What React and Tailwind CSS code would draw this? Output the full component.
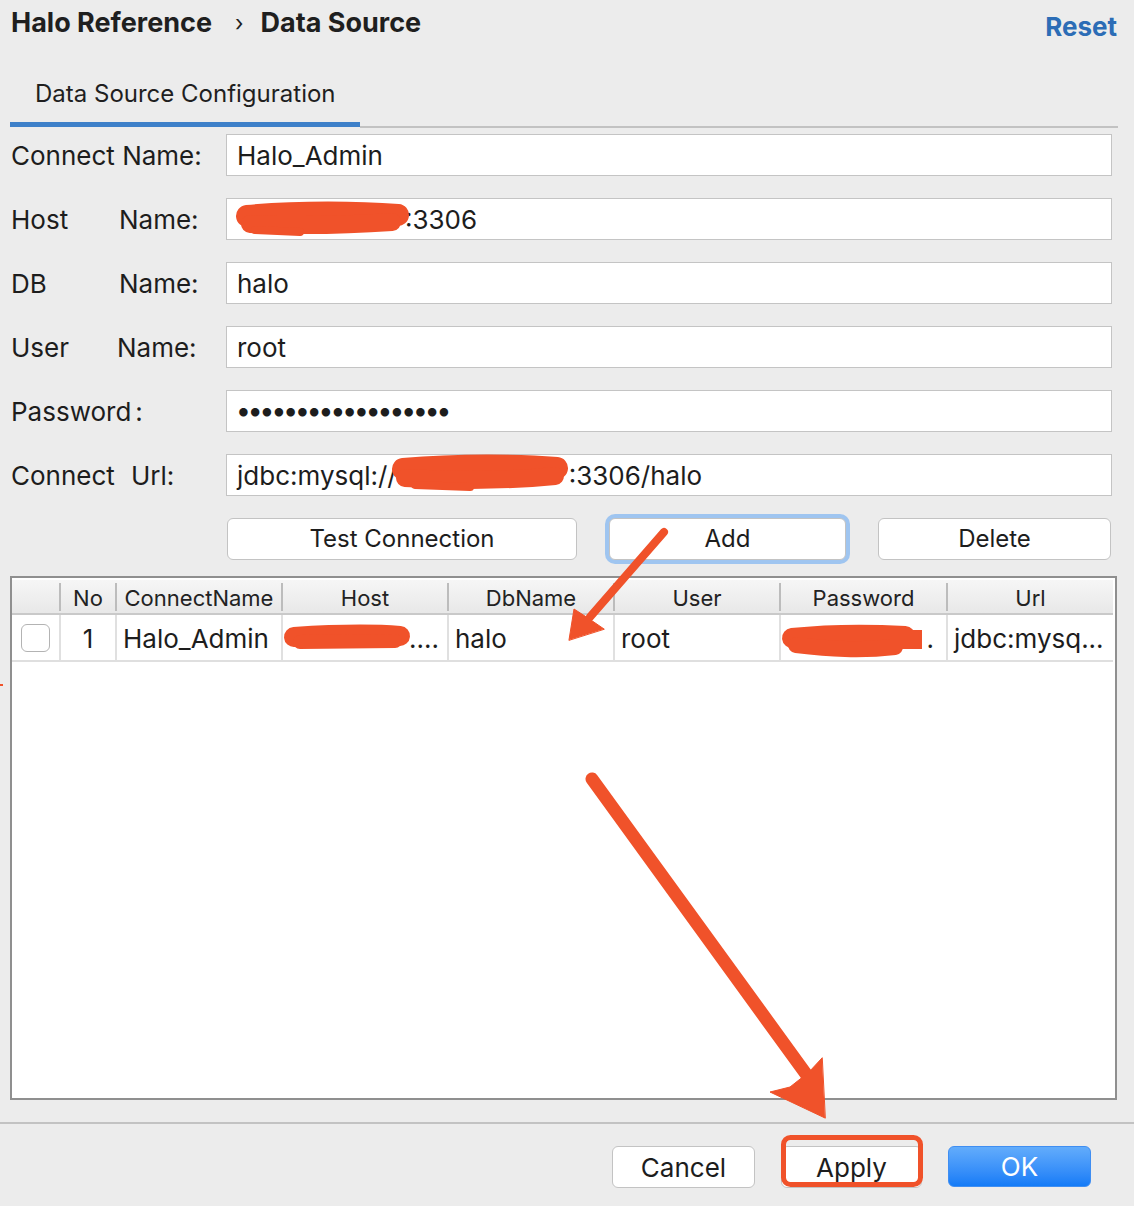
import React from "react";

const cols = [47, 56, 166, 166, 166, 166, 167, 167];

function Label({ children }) {
  return <div className="w-[215px] shrink-0 flex items-center text-[26px] text-[#1d1d1d]">{children}</div>;
}

function Field({ children }) {
  return (
    <div className="flex-1 h-[42px] bg-white border border-[#c4c4c4] flex items-center pl-[10px] text-[26px] text-[#1d1d1d] whitespace-nowrap">
      {children}
    </div>
  );
}

function Btn({ children, className = "" }) {
  return (
    <button className={"h-[42px] rounded-[6px] bg-white border border-[#c3c3c3] text-[24px] text-[#1d1d1d] flex items-center justify-center " + className}>
      {children}
    </button>
  );
}

export default function App() {
  const headers = ["", "No", "ConnectName", "Host", "DbName", "User", "Password", "Url"];
  return (
    <div className="relative w-[1134px] h-[1206px] bg-[#ececec] overflow-hidden font-[Inter,sans-serif] text-[#1d1d1d]">
      {/* Title bar */}
      <div className="h-[46px] flex items-center justify-between pl-[11px] pr-[17px]">
        <div className="flex items-center text-[27px] font-bold text-[#1f1f1f]">
          <span>Halo Reference</span>
          <span className="ml-[23px] mr-[17px] text-[22px] font-normal">›</span>
          <span>Data Source</span>
        </div>
        <div className="text-[26px] font-bold text-[#2c6db6] mt-[6px]">Reset</div>
      </div>

      {/* Tab strip */}
      <div className="flex items-end ml-[10px] mr-[16px] h-[82px]">
        <div className="w-[350px] h-[81px] mb-[1px] border-b-[5px] border-[#3e80c9] flex items-end pb-[13px] pl-[25px] text-[24px] leading-[30px] text-[#1f1f1f]">
          Data Source Configuration
        </div>
        <div className="flex-1 h-[2px] bg-[#c2c2c2]"></div>
      </div>

      {/* Form */}
      <div className="mt-[6px] pl-[11px] pr-[22px] flex flex-col gap-[22px]">
        <div className="flex">
          <Label>Connect Name:</Label>
          <Field>Halo_Admin</Field>
        </div>
        <div className="flex">
          <Label><span className="w-[108px]">Host</span><span>Name:</span></Label>
          <Field><span className="inline-block w-[168px]"></span>:3306</Field>
        </div>
        <div className="flex">
          <Label><span className="w-[108px]">DB</span><span>Name:</span></Label>
          <Field>halo</Field>
        </div>
        <div className="flex">
          <Label><span className="w-[106px]">User</span><span>Name:</span></Label>
          <Field>root</Field>
        </div>
        <div className="flex">
          <Label><span>Password</span><span className="ml-[4px]">:</span></Label>
          <Field><span className="tracking-[-1px] text-[27px] font-bold">••••••••••••••••••</span></Field>
        </div>
        <div className="flex">
          <Label><span className="w-[120px]">Connect</span><span>Url:</span></Label>
          <Field>jdbc:mysql://<span className="inline-block w-[172px]"></span>:3306/halo</Field>
        </div>
        <div className="flex pl-[216px] pr-[1px]">
          <Btn className="w-[350px]">Test Connection</Btn>
          <Btn className="w-[237px] ml-[32px] border-[#86b5ec] ring-4 ring-[#9fc5f0]">Add</Btn>
          <Btn className="w-[233px] ml-[32px]">Delete</Btn>
        </div>
      </div>

      {/* Table */}
      <div className="mt-[16px] ml-[10px] w-[1107px] h-[524px] border-2 border-[#8f8f8f] bg-white">
        <div className="mt-[2px] flex h-[35px] bg-gradient-to-b from-[#f6f6f6] to-[#e8e8e8] border-b-2 border-[#c9c9c9] w-[1101px]">
          {headers.map((h, i) => (
            <div key={i} style={{ width: cols[i] }} className="flex items-center shrink-0">
              {i > 0 && <div className="w-[2px] h-[28px] bg-[#bcbcbc]"></div>}
              <div className="flex-1 text-center text-[22px] text-[#222] pt-[3px]">{h}</div>
            </div>
          ))}
        </div>
        <div className="flex h-[47px] border-b-2 border-[#dfdfdf] w-[1101px] text-[26px] text-[#1d1d1d]">
          <div style={{ width: cols[0] }} className="shrink-0 flex items-center pl-[9px]">
            <div className="w-[29px] h-[28px] rounded-[6px] border border-[#b3b3b3] bg-white"></div>
          </div>
          <div style={{ width: cols[1] }} className="shrink-0 border-l-2 border-[#e0e0e0] flex items-center justify-center pt-[2px]">1</div>
          <div style={{ width: cols[2] }} className="shrink-0 border-l-2 border-[#e0e0e0] flex items-center pl-[6px] pt-[2px]">Halo_Admin</div>
          <div style={{ width: cols[3] }} className="shrink-0 border-l-2 border-[#e0e0e0] flex items-center justify-end pr-[8px] pt-[2px]">....</div>
          <div style={{ width: cols[4] }} className="shrink-0 border-l-2 border-[#e0e0e0] flex items-center pl-[6px] pt-[2px]">halo</div>
          <div style={{ width: cols[5] }} className="shrink-0 border-l-2 border-[#e0e0e0] flex items-center pl-[6px] pt-[2px]">root</div>
          <div style={{ width: cols[6] }} className="shrink-0 border-l-2 border-[#e0e0e0] flex items-center justify-end pr-[12px] pt-[2px]">.</div>
          <div style={{ width: cols[7] }} className="shrink-0 border-l-2 border-[#e0e0e0] flex items-center pl-[6px] pt-[2px]">jdbc:mysq...</div>
        </div>
      </div>

      {/* Footer */}
      <div className="mt-[22px] h-[2px] bg-[#c2c2c2]"></div>
      <div className="mt-[22px] flex justify-end pr-[43px]">
        <Btn className="w-[143px] h-[41px] text-[26px]">Cancel</Btn>
        <Btn className="w-[141px] h-[41px] ml-[26px] text-[26px]">Apply</Btn>
        <button className="w-[143px] h-[41px] ml-[26px] rounded-[6px] bg-gradient-to-b from-[#62acfb] to-[#127bf7] border border-[#3f8ef2] text-[26px] text-white flex items-center justify-center">
          OK
        </button>
      </div>

      {/* Annotations overlay */}
      <svg className="absolute left-0 top-0 pointer-events-none" width="1134" height="1206" viewBox="0 0 1134 1206">
        <g fill="#f0522a" stroke="#f0522a" strokeLinecap="round" strokeLinejoin="round">
          {/* host field blotch */}
          <path d="M247 216 C300 211 360 212 398 215" strokeWidth="22" fill="none" />
          <path d="M250 224 C300 226 350 225 392 222" strokeWidth="18" fill="none" />
          <path d="M255 230 L300 232" strokeWidth="8" fill="none" />
          {/* url blotch */}
          <path d="M403 469 C460 464 520 465 557 468" strokeWidth="22" fill="none" />
          <path d="M405 478 C460 481 515 480 555 476" strokeWidth="18" fill="none" />
          <path d="M415 485 L470 487" strokeWidth="8" fill="none" />
          {/* table host blotch */}
          <path d="M294 637 C340 634 375 634 400 636" strokeWidth="20" fill="none" />
          <path d="M300 642 L395 641" strokeWidth="14" fill="none" />
          {/* table password blotch */}
          <path d="M792 638 C830 634 870 634 905 636" strokeWidth="20" fill="none" />
          <path d="M796 645 C830 649 860 651 895 647" strokeWidth="16" fill="none" />
          <rect x="890" y="630" width="32" height="19" strokeWidth="0" />
          {/* arrow 1 */}
          <path d="M664 532 L590 617" strokeWidth="8" fill="none" />
          <polygon points="569,640 574,609 588,618 604,629" strokeWidth="1" />
          {/* arrow 2 */}
          <path d="M592 779 L806 1074" strokeWidth="13" fill="none" />
          <polygon points="825,1118 770,1092 790,1087 809,1072 822,1058" strokeWidth="1" />
          {/* small stray mark */}
          <rect x="0" y="684" width="3" height="2" strokeWidth="0" />
        </g>
        <rect x="783.5" y="1137.5" width="137" height="47" rx="7" fill="none" stroke="#f0522a" strokeWidth="5" />
      </svg>
    </div>
  );
}
